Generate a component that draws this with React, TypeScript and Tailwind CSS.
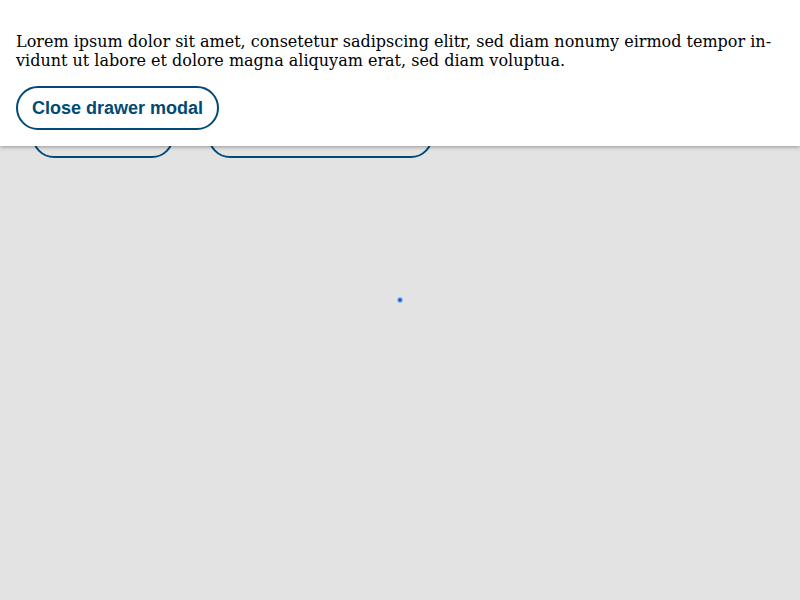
import React from "react";

export default function App() {
  const btn =
    "h-[44px] rounded-full border-2 border-[#004a75] px-[14px] text-[18px] font-bold text-[#004a75] bg-transparent [font-family:'Liberation_Sans',Arial,sans-serif] leading-none whitespace-nowrap";
  return (
    <div className="relative w-[800px] h-[600px] overflow-hidden bg-[#e3e3e3]">
      <div className="flex gap-[34px] pl-[32px] pt-[114px]">
        <button className={btn}>Open drawer</button>
        <button className={btn}>Open drawer as modal</button>
      </div>
      <div className="absolute left-[397px] top-[297px] w-[6px] h-[6px] rounded-full bg-[#1a66d9] border border-[#a8c4f2]" />
      <div className="absolute left-0 top-0 w-full h-[146px] bg-white shadow-[0_1px_4px_rgba(0,0,0,0.35)] px-[16px] pt-[32px]">
        <p className="text-[16px] leading-[19px] text-black [font-family:'DejaVu_Serif',serif]">
          Lorem ipsum dolor sit amet, consetetur sadipscing elitr, sed diam nonumy eirmod tempor in-
          <br />
          vidunt ut labore et dolore magna aliquyam erat, sed diam voluptua.
        </p>
        <button className={btn + " mt-[16px] bg-white"}>Close drawer modal</button>
      </div>
    </div>
  );
}
